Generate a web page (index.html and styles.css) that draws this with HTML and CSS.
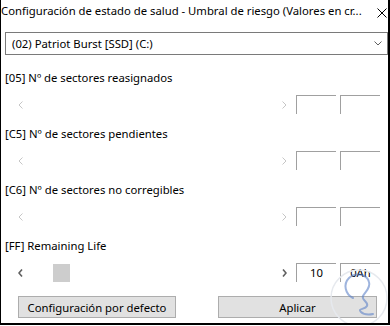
FILE: index.html
```html
<!DOCTYPE html>
<html lang="es">
<head>
    <meta charset="UTF-8">
    <title>Configuración de estado de salud</title>
    <link rel="stylesheet" href="styles.css">
</head>
<body>
    <div class="window">
        <div class="titlebar">
            <span class="title">Configuración de estado de salud - Umbral de riesgo (Valores en cr...</span>
            <svg class="close" width="10" height="10" viewBox="0 0 10 10">
                <path d="M0.5 0.5 L9.5 9.5 M9.5 0.5 L0.5 9.5" stroke="#000" stroke-width="1" fill="none"/>
            </svg>
        </div>

        <div class="combo">
            <span>(02) Patriot Burst [SSD] (C:)</span>
            <svg class="chevron" width="8" height="5" viewBox="0 0 8 5">
                <path d="M0.5 0.5 L4 4 L7.5 0.5" stroke="#606060" fill="none"/>
            </svg>
        </div>

        <!-- attribute rows -->
        <div class="field">
            <div class="label">[05] Nº de sectores reasignados</div>
            <div class="row">
                <div class="track disabled">
                    <span class="arrow"><svg width="5" height="8" viewBox="0 0 5 8"><path d="M4.5 0.5 L1 4 L4.5 7.5" fill="none"/></svg></span>
                    <span class="spacer"></span>
                    <span class="arrow"><svg width="5" height="8" viewBox="0 0 5 8"><path d="M0.5 0.5 L4 4 L0.5 7.5" fill="none"/></svg></span>
                </div>
                <div class="box"></div>
                <div class="box"></div>
            </div>
        </div>

        <div class="field">
            <div class="label">[C5] Nº de sectores pendientes</div>
            <div class="row">
                <div class="track disabled">
                    <span class="arrow"><svg width="5" height="8" viewBox="0 0 5 8"><path d="M4.5 0.5 L1 4 L4.5 7.5" fill="none"/></svg></span>
                    <span class="spacer"></span>
                    <span class="arrow"><svg width="5" height="8" viewBox="0 0 5 8"><path d="M0.5 0.5 L4 4 L0.5 7.5" fill="none"/></svg></span>
                </div>
                <div class="box"></div>
                <div class="box"></div>
            </div>
        </div>

        <div class="field">
            <div class="label">[C6] Nº de sectores no corregibles</div>
            <div class="row">
                <div class="track disabled">
                    <span class="arrow"><svg width="5" height="8" viewBox="0 0 5 8"><path d="M4.5 0.5 L1 4 L4.5 7.5" fill="none"/></svg></span>
                    <span class="spacer"></span>
                    <span class="arrow"><svg width="5" height="8" viewBox="0 0 5 8"><path d="M0.5 0.5 L4 4 L0.5 7.5" fill="none"/></svg></span>
                </div>
                <div class="box"></div>
                <div class="box"></div>
            </div>
        </div>

        <div class="field">
            <div class="label">[FF] Remaining Life</div>
            <div class="row">
                <div class="track">
                    <span class="arrow"><svg width="5" height="8" viewBox="0 0 5 8"><path d="M4 0.5 L1 4 L4 7.5" fill="none"/></svg></span>
                    <span class="thumb"></span>
                    <span class="spacer"></span>
                    <span class="arrow"><svg width="5" height="8" viewBox="0 0 5 8"><path d="M1 0.5 L4 4 L1 7.5" fill="none"/></svg></span>
                </div>
                <div class="box">10</div>
                <div class="box">0Ah</div>
            </div>
        </div>

        <div class="buttons">
            <button class="btn btn-default">Configuración por defecto</button>
            <button class="btn btn-apply">Aplicar</button>
        </div>

        <!-- watermark -->
        <svg class="watermark" width="62" height="70" viewBox="0 0 62 70">
            <circle cx="30" cy="40" r="28" fill="none" stroke="#e6e9ee" stroke-width="1.5"/>
            <path d="M24 40 C16 36 14 26 20 20 C26 14 38 16 40 24 C42 30 36 34 34 38 C32 42 40 44 38 48 C36 52 28 50 32 54 C36 58 44 56 44 56"
                  fill="none" stroke="#5d82c8" stroke-width="2" stroke-linecap="round" opacity="0.6"/>
        </svg>
    </div>
</body>
</html>
```

FILE: styles.css
```css
body {
    margin: 0;
    background: #fff;
    font-family: "Noto Sans", sans-serif;
    font-size: 11.3px;
    color: #000;
}
.window {
    position: relative;
    box-sizing: border-box;
    height: 325px;
    border-left: 1px solid #000;
    border-right: 2px solid #000;
    border-bottom: 2px solid #000;
    overflow: hidden;
}
.titlebar {
    display: flex;
    align-items: flex-start;
    height: 32px;
}
.title {
    padding-top: 3px;
    line-height: 16px;
    white-space: nowrap;
}
.close {
    margin-left: auto;
    margin-top: 8px;
    margin-right: 1px;
}
.combo {
    display: flex;
    align-items: center;
    height: 23px;
    box-sizing: border-box;
    margin-left: 4px;
    padding: 0 5px 0 6px;
    border: 1px solid #7a7a7a;
}
.combo .chevron {
    margin-left: auto;
}
.combo + .field {
    margin-top: 15px;
}
.field {
    height: 56px;
}
.label {
    padding-left: 4px;
    line-height: 16px;
    height: 16px;
}
.row {
    display: flex;
    align-items: center;
    margin-top: 9px;
    height: 19px;
}
.track {
    display: flex;
    align-items: center;
    width: 281px;
    height: 19px;
    margin-left: 11px;
    margin-right: 3px;
}
.arrow {
    display: flex;
    align-items: center;
    justify-content: center;
    width: 17px;
    height: 19px;
}
.arrow path {
    stroke: #606060;
    stroke-width: 1.6;
}
.track.disabled .arrow path {
    stroke: #c6c6c6;
    stroke-width: 1;
}
.spacer {
    flex: 1;
}
.thumb {
    width: 17px;
    height: 18px;
    margin-left: 24px;
    background: #cdcdcd;
}
.box {
    box-sizing: border-box;
    width: 40px;
    height: 19px;
    margin-right: 4px;
    border-top: 1px solid #a0a0a0;
    border-left: 1px solid #a0a0a0;
    text-align: center;
    line-height: 18px;
}
.buttons {
    display: flex;
    margin-top: 2px;
    padding-left: 17px;
}
.btn {
    box-sizing: border-box;
    height: 22px;
    padding: 0;
    font-family: inherit;
    font-size: 11.3px;
    color: #000;
    background: #e1e1e1;
    border: 1px solid #adadad;
}
.btn-default {
    width: 158px;
}
.btn-apply {
    width: 159px;
    margin-left: 42px;
}
.watermark {
    position: absolute;
    left: 328px;
    top: 258px;
    pointer-events: none;
}
```
